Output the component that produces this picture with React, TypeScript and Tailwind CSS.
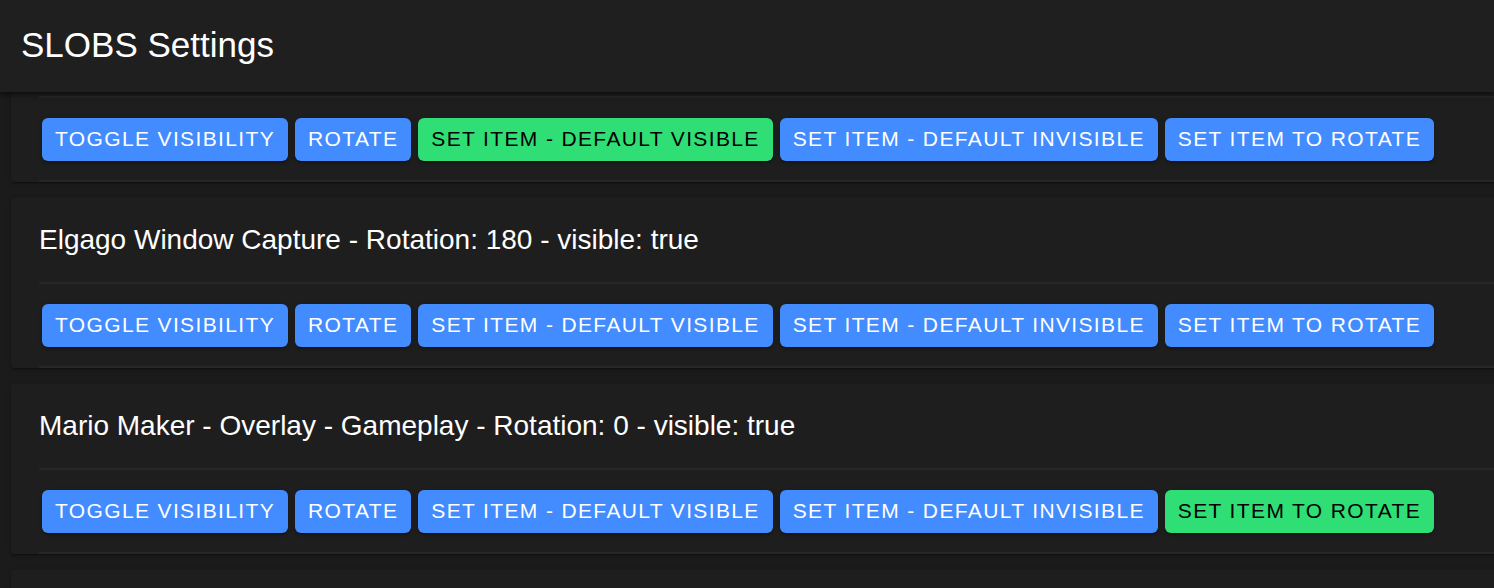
import React from 'react';

type SceneItem = {
  id: string;
  name: string;
  rotation: number;
  visible: boolean;
  defaultVisible: boolean;
  rotateTarget: boolean;
};

const items: SceneItem[] = [
  { id: '1', name: 'Game Capture', rotation: 0, visible: true, defaultVisible: true, rotateTarget: false },
  { id: '2', name: 'Elgago Window Capture', rotation: 180, visible: true, defaultVisible: false, rotateTarget: false },
  { id: '3', name: 'Mario Maker - Overlay - Gameplay', rotation: 0, visible: true, defaultVisible: false, rotateTarget: true },
  { id: '4', name: 'Webcam', rotation: 0, visible: true, defaultVisible: false, rotateTarget: false },
];

const ActionButton: React.FC<{ label: string; active?: boolean }> = ({ label, active }) => (
  <button
    className={
      'h-[43px] px-[13px] rounded-[6px] text-[21px] tracking-[0.065em] uppercase whitespace-nowrap shadow-[0_3px_1px_-2px_rgba(0,0,0,0.2),0_2px_2px_0_rgba(0,0,0,0.14),0_1px_5px_0_rgba(0,0,0,0.12)] ' +
      (active ? 'bg-[#2fdf75] text-black' : 'bg-[#428cff] text-white')
    }
  >
    {label}
  </button>
);

const ItemCard: React.FC<{ item: SceneItem }> = ({ item }) => (
  <div className="ml-[11px] w-[1520px] shrink-0 rounded-[4px] bg-[#1e1e1e] shadow-[0_3px_1px_-2px_rgba(0,0,0,0.2),0_2px_2px_0_rgba(0,0,0,0.14),0_1px_5px_0_rgba(0,0,0,0.12)]">
    {/* Label row */}
    <div className="pl-[28px]">
      <div className="h-[86px] flex items-center border-b-2 border-[#272727] text-[28px] text-white">
        {item.name} - Rotation: {item.rotation} - visible: {String(item.visible)}
      </div>
    </div>
    {/* Actions row */}
    <div className="pl-[28px]">
      <div className="h-[84px] flex items-center gap-[7px] pl-[3px] border-b-2 border-[#272727]">
        <ActionButton label="Toggle Visibility" />
        <ActionButton label="Rotate" />
        <ActionButton label="Set Item - Default Visible" active={item.defaultVisible} />
        <ActionButton label="Set Item - Default Invisible" />
        <ActionButton label="Set Item to Rotate" active={item.rotateTarget} />
      </div>
    </div>
  </div>
);

export default function App() {
  return (
    <div className="h-screen w-full overflow-hidden flex flex-col bg-[#1b1b1b] font-['Liberation_Sans',Arial,sans-serif]">
      <header className="relative z-10 h-[92px] shrink-0 flex items-center px-[21px] pb-[4px] bg-[#1f1f1f] shadow-[0_2px_4px_-1px_rgba(0,0,0,0.4),0_4px_5px_0_rgba(0,0,0,0.28)]">
        <h1 className="text-[35px] leading-none text-white">SLOBS Settings</h1>
      </header>
      <main className="flex-1 overflow-hidden">
        {/* list is scrolled: first card's title is under the toolbar */}
        <div className="-mt-[80px] flex flex-col gap-[16px]">
          {items.map((item) => (
            <ItemCard key={item.id} item={item} />
          ))}
        </div>
      </main>
    </div>
  );
}
